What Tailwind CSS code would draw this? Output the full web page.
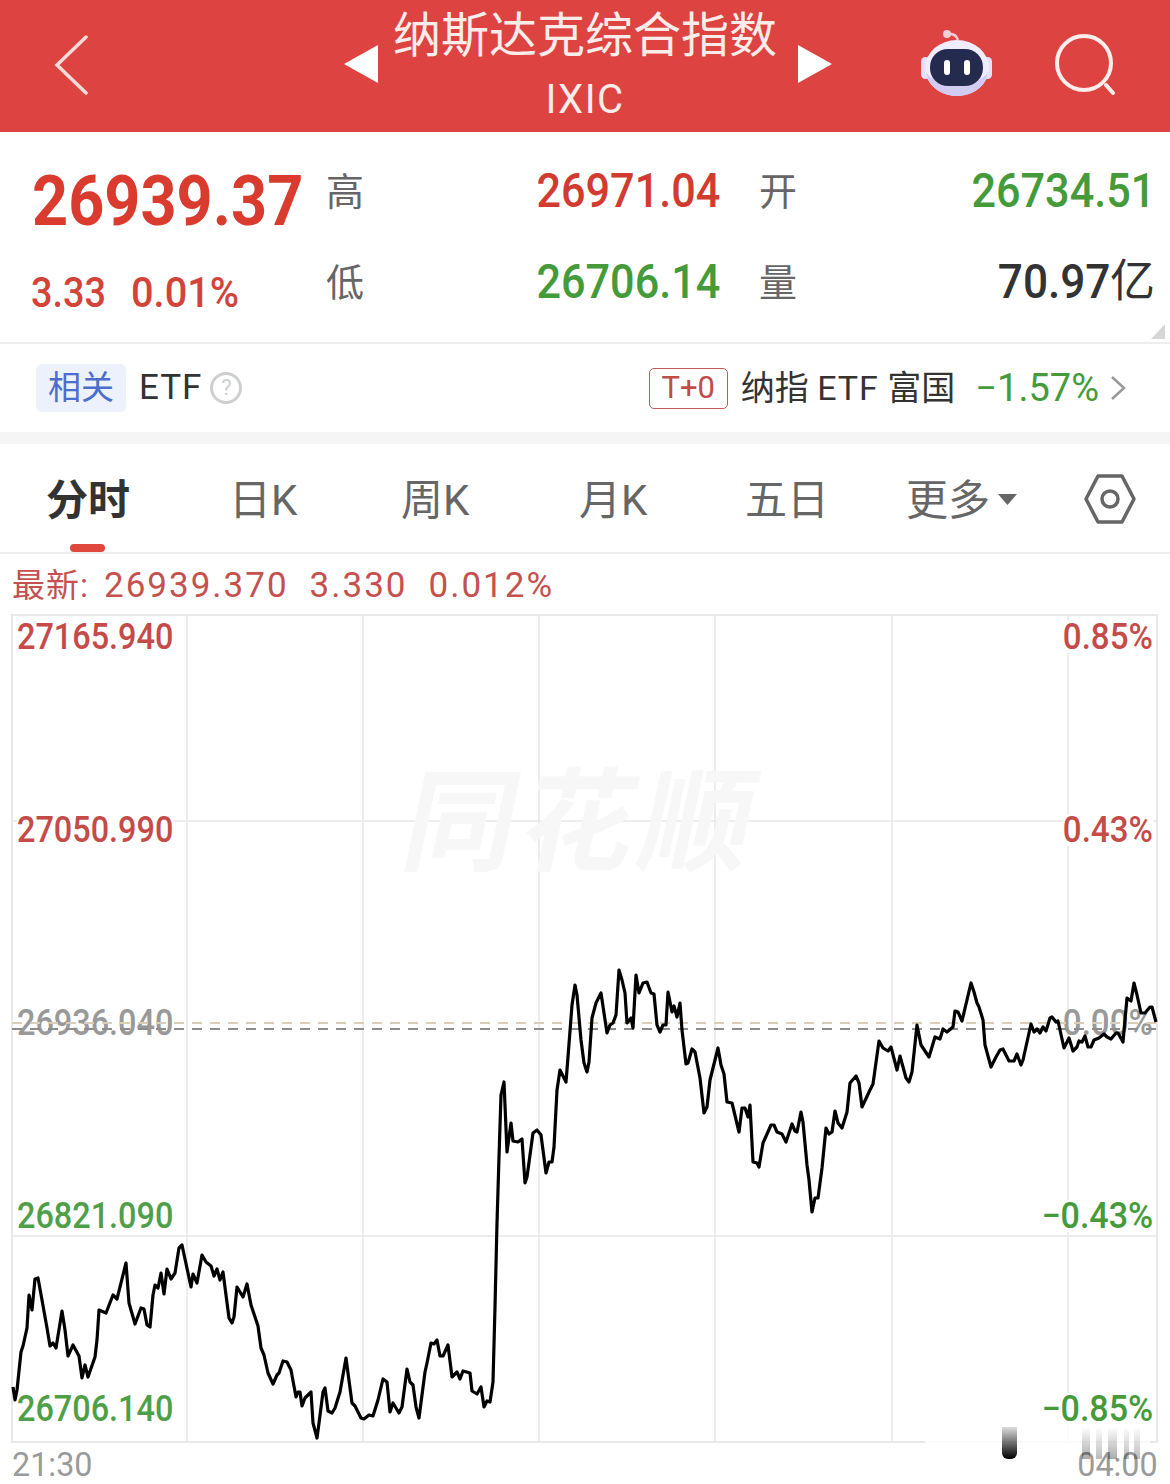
<!DOCTYPE html>
<html lang="zh-CN">
<head>
<meta charset="utf-8">
<script src="https://cdn.jsdelivr.net/npm/@tailwindcss/browser@4"></script>
<title>纳斯达克综合指数</title>
</head>
<body class="bg-white">
<div class="w-[1170px] h-[1484px] overflow-hidden bg-white font-['Roboto','Noto_Sans_CJK_SC',sans-serif]">

  <!-- Header -->
  <header class="h-[132px] bg-[#dd4341] flex items-center text-white">
    <svg class="ml-[54px] w-[34px] h-[60px] -mt-[2px]" viewBox="0 0 34 60" fill="none" stroke="#f9dcd9" stroke-width="3.5" stroke-linecap="round"><path d="M32 2 L3 30 L32 58"/></svg>
    <svg class="ml-[256px] w-[34px] h-[38px] -mt-[5px]" viewBox="0 0 34 38"><path d="M0 19 L34 0 V38 Z" fill="#fff"/></svg>
    <div class="ml-[15px] w-[384px] pt-[6px] flex flex-col items-center">
      <div class="text-[48px] leading-[52px] -mt-[4px] text-[#fbecea] whitespace-nowrap">纳斯达克综合指数</div>
      <div class="text-[40px] leading-[48px] mt-[14px] tracking-[1.5px] text-[#fbecea]">IXIC</div>
    </div>
    <svg class="ml-[21px] w-[34px] h-[38px] -mt-[5px]" viewBox="0 0 34 38"><path d="M34 19 L0 0 V38 Z" fill="#fff"/></svg>
    <svg class="ml-[88px] w-[74px] h-[68px] -mt-[4px]" viewBox="0 0 74 68">
      <path d="M27 4 Q36 3 38 10" fill="none" stroke="#f3c9d2" stroke-width="2.5"/>
      <circle cx="27" cy="4" r="4" fill="#f6cfd6"/>
      <rect x="1" y="27" width="9" height="22" rx="4.5" fill="#e4e0f8"/>
      <rect x="63" y="27" width="9" height="22" rx="4.5" fill="#e4e0f8"/>
      <ellipse cx="37" cy="38" rx="32" ry="28" fill="#efecfb"/>
      <path d="M6 42 C9 59 24 66 37 66 C50 66 65 59 68 42 C60 58 14 58 6 42Z" fill="#d3ccf2"/>
      <rect x="10" y="19" width="53" height="37" rx="18" fill="#242b4f"/>
      <rect x="24" y="30" width="6" height="15" rx="3" fill="#fff"/>
      <rect x="44" y="30" width="6" height="15" rx="3" fill="#fff"/>
    </svg>
    <svg class="ml-[60px] w-[66px] h-[66px]" viewBox="0 0 66 66" fill="none" stroke="#fdeeec" stroke-width="4" stroke-linecap="round"><circle cx="30" cy="30" r="27"/><path d="M52 52 L59 60"/></svg>
  </header>

  <!-- Quote -->
  <section class="relative h-[212px] pt-[12px] pl-[32px] flex border-b-2 border-[#eeeeee]">
    <div class="w-[294px] flex flex-col">
      <div class="h-[92px] pt-[22px] flex items-center">
        <span class="inline-block origin-left scale-x-[0.9] text-[70px] leading-[70px] font-bold text-[#d93b2f] whitespace-nowrap">26939.37</span>
      </div>
      <div class="h-[92px] pt-[20px] flex items-center -ml-[1px] text-[#d2433a] text-[43px] leading-[50px] font-medium">
        <span class="w-[100px] inline-block origin-left scale-x-[0.88] whitespace-nowrap">3.33</span>
        <span class="inline-block origin-left scale-x-[0.925] whitespace-nowrap">0.01%</span>
      </div>
    </div>
    <div class="mt-[1px] grid grid-cols-[38px_356px_77px_358px] grid-rows-[91px_91px] items-center">
      <div class="pt-[4px] text-[38px] text-[#666666]">高</div>
      <div class="text-right"><span class="inline-block origin-right scale-x-[0.9] text-[48px] leading-[54px] font-medium text-[#d23b30]">26971.04</span></div>
      <div class="pt-[4px] pl-[39px] text-[38px] text-[#666666]">开</div>
      <div class="text-right"><span class="inline-block origin-right scale-x-[0.9] text-[48px] leading-[54px] font-medium text-[#459a3a]">26734.51</span></div>
      <div class="pt-[4px] text-[38px] text-[#666666]">低</div>
      <div class="text-right"><span class="inline-block origin-right scale-x-[0.9] text-[48px] leading-[54px] font-medium text-[#459a3a]">26706.14</span></div>
      <div class="pt-[4px] pl-[39px] text-[38px] text-[#666666]">量</div>
      <div class="text-right text-[#333333] flex justify-end items-center"><span class="inline-block origin-right scale-x-[0.92] text-[48px] leading-[54px] font-medium">70.97</span><span class="text-[45px] leading-[54px]">亿</span></div>
    </div>
    <svg class="absolute right-[5px] bottom-[3px] w-[14px] h-[15px]" viewBox="0 0 14 15"><path d="M14 0 V15 H0 Z" fill="#d6d6d6"/></svg>
  </section>

  <!-- ETF row -->
  <section class="h-[88px] flex items-center pl-[36px] pr-[44px]">
    <span class="w-[90px] h-[48px] rounded-[6px] bg-[#ecf1fb] text-[#4a6ec9] text-[33px] leading-[48px] text-center">相关</span>
    <span class="ml-[13px] text-[35px] text-[#333333] tracking-[1px]">ETF</span>
    <span class="ml-[8px] w-[32px] h-[32px] rounded-full border-[3px] border-[#cfcfcf] text-[#cfcfcf] text-[22px] leading-[26px] text-center">?</span>
    <span class="ml-auto w-[79px] h-[41px] rounded-[5px] border border-[#c25a5a] text-[#c24a4a] text-[31px] leading-[38px] text-center">T+0</span>
    <span class="ml-[13px] text-[34px] text-[#333333] whitespace-nowrap">纳指 <span class="tracking-[1px]">ETF</span> 富国</span>
    <span class="ml-[20px] text-[38px] text-[#459a3a] whitespace-nowrap">−1.57%</span>
    <svg class="ml-[11px] w-[16px] h-[26px]" viewBox="0 0 16 26" fill="none" stroke="#999999" stroke-width="2.5"><path d="M2 2 L14 13 L2 24"/></svg>
  </section>

  <div class="h-[12px] bg-[#f5f5f5]"></div>

  <!-- Tabs -->
  <nav class="relative h-[110px] border-b-2 border-[#eeeeee] text-[42px] leading-[50px] text-[#666666]">
    <div class="flex items-center h-[108px] pl-[46px] pt-[6px]">
      <span class="font-bold text-[#333333] w-[183px]">分时</span>
      <span class="w-[172px]">日K</span>
      <span class="w-[178px]">周K</span>
      <span class="w-[166px]">月K</span>
      <span class="w-[161px]">五日</span>
      <span>更多</span>
      <svg class="ml-[8px] w-[19px] h-[11px] -mt-[4px]" viewBox="0 0 19 11"><path d="M0 0 H19 L9.5 11 Z" fill="#666666"/></svg>
      <svg class="ml-[67px] w-[52px] h-[52px] -mt-[5px]" viewBox="0 0 52 52" fill="none" stroke="#666666" stroke-width="3.5" stroke-linejoin="round"><path d="M14 3 H38 L50 26 L38 49 H14 L2 26 Z"/><circle cx="26" cy="26" r="8"/></svg>
    </div>
    <span class="absolute left-[70px] bottom-0 w-[35px] h-[8px] rounded-[4px] bg-[#e0483c]"></span>
  </nav>

  <!-- Latest -->
  <div class="h-[60px] pl-[12px] pt-[10px] text-[35px] leading-[44px] text-[#c4514f] tracking-[2px] whitespace-nowrap flex">
    <span class="w-[92px] text-[33px] tracking-[1px]">最新:</span><span>26939.370</span><span class="ml-[21px]">3.330</span><span class="ml-[21px]">0.012%</span>
  </div>

  <!-- Chart -->
  <div class="relative h-[870px]">
    <svg class="absolute left-0 top-0 w-[1170px] h-[870px]" viewBox="0 614 1170 870" fill="none">
      <g stroke="#e8e8e8" stroke-width="1.5">
        <path d="M187 615V1442M363 615V1442M539 615V1442M715 615V1442M892 615V1442M1068 615V1442"/>
        <path d="M12 821H1157M12 1236H1157"/>
        <rect x="12" y="615" width="1145" height="827" stroke-width="2"/>
      </g>
    </svg>
    <div class="absolute left-[406px] top-[150px] -skew-x-12 text-[112px] leading-[120px] font-bold tracking-[6px] text-[#f7f7f7] whitespace-nowrap">同花顺</div>

    <div class="absolute left-[17px] top-[7px] flex flex-col gap-[161px] text-[36px] leading-[32px] font-medium">
      <span class="h-[32px] w-[172px] inline-block origin-left scale-x-[0.9] bg-white text-[#c44b48]">27165.940</span>
      <span class="h-[32px] w-[172px] inline-block origin-left scale-x-[0.9] bg-white text-[#c44b48]">27050.990</span>
      <span class="h-[32px] w-[172px] inline-block origin-left scale-x-[0.9] text-[#999999]">26936.040</span>
      <span class="h-[32px] w-[172px] inline-block origin-left scale-x-[0.9] bg-white text-[#4f9f49]">26821.090</span>
      <span class="h-[32px] w-[172px] inline-block origin-left scale-x-[0.9] bg-white text-[#4f9f49]">26706.140</span>
    </div>
    <div class="absolute right-[17px] top-[7px] flex flex-col items-end gap-[161px] text-[36px] leading-[32px] font-medium">
      <span class="h-[32px] inline-block origin-right scale-x-[0.92] bg-white text-[#c44b48]">0.85%</span>
      <span class="h-[32px] inline-block origin-right scale-x-[0.92] bg-white text-[#c44b48]">0.43%</span>
      <span class="h-[32px] inline-block origin-right scale-x-[0.92] text-[#999999]">0.00%</span>
      <span class="h-[32px] inline-block origin-right scale-x-[0.946] bg-white text-[#459a3a]">−0.43%</span>
      <span class="h-[32px] inline-block origin-right scale-x-[0.946] bg-white text-[#459a3a]">−0.85%</span>
    </div>

    <svg class="absolute left-0 top-0 w-[1170px] h-[870px]" viewBox="0 614 1170 870" fill="none">
      <path d="M12 1023H1157" stroke="#d9cfb8" stroke-width="2" stroke-dasharray="10 8"/>
      <path d="M12 1029H1157" stroke="#8c8c8c" stroke-width="2" stroke-dasharray="10 8"/>
      <polyline stroke="#000" stroke-width="3.2" stroke-linejoin="round" points="13,1387 15,1400 17,1390 21,1352 23,1346 27,1328 29,1295 32,1310 35,1279 38,1278 42,1300 47,1328 50,1346 53,1343 56,1348 62,1311 65,1330 68,1356 73,1345 79,1356 82,1378 85,1365 88,1377 95,1357 97,1340 99,1310 106,1313 113,1295 117,1299 126,1263 129,1303 135,1324 141,1308 144,1309 147,1325 150,1327 153,1295 155,1285 158,1288 161,1273 164,1294 167,1269 171,1279 175,1273 179,1248 182,1245 191,1287 193,1274 197,1283 202,1255 206,1262 211,1266 214,1276 217,1269 220,1280 223,1272 229,1318 232,1323 234,1317 237,1287 243,1297 247,1284 251,1305 258,1326 261,1348 264,1355 268,1373 273,1384 277,1375 279,1373 283,1361 287,1362 291,1370 296,1397 298,1392 300,1392 302,1406 305,1398 311,1392 313,1423 317,1438 319,1423 323,1392 325,1388 328,1411 332,1413 335,1408 340,1392 346,1358 352,1403 355,1406 361,1418 364,1419 369,1415 373,1416 378,1400 383,1379 387,1382 390,1412 393,1403 399,1413 402,1407 407,1369 410,1382 413,1385 416,1407 419,1418 425,1372 427,1363 431,1343 434,1344 437,1340 440,1356 443,1356 448,1345 452,1377 457,1372 460,1379 463,1371 470,1373 472,1391 477,1394 481,1387 484,1407 487,1401 490,1402 493,1382 495,1307 497,1223 499,1157 501,1095 504,1082 507,1152 511,1123 513,1141 518,1142 522,1139 525,1183 527,1177 533,1133 537,1130 541,1135 546,1173 549,1162 552,1162 554,1147 557,1090 560,1070 566,1082 568,1057 572,1005 575,985 577,995 581,1040 584,1063 587,1072 589,1062 592,1018 596,1003 601,993 607,1033 610,1025 613,1023 616,1015 619,970 622,980 625,993 627,1023 631,1018 633,1028 636,975 639,993 643,983 647,982 651,993 654,994 657,1025 660,1032 663,1025 666,1025 668,992 672,1012 674,1006 677,1017 680,1003 682,1030 686,1064 688,1063 692,1049 695,1052 700,1078 704,1113 707,1107 710,1080 718,1048 721,1065 724,1074 727,1102 732,1103 739,1132 742,1108 745,1108 748,1117 750,1105 753,1162 757,1163 759,1167 763,1143 771,1125 774,1125 777,1132 782,1134 786,1142 792,1124 795,1131 797,1132 801,1112 803,1122 807,1165 809,1180 812,1212 815,1198 818,1198 822,1168 826,1128 829,1134 832,1132 835,1111 838,1123 842,1128 847,1112 850,1083 856,1076 859,1083 862,1107 870,1090 873,1084 879,1041 883,1048 888,1051 891,1047 897,1070 900,1056 906,1078 909,1082 912,1072 917,1025 921,1045 929,1057 935,1037 940,1039 943,1029 947,1032 953,1027 955,1011 958,1012 962,1021 971,983 974,992 977,1003 979,1007 983,1020 985,1045 991,1067 996,1057 1000,1050 1003,1049 1009,1061 1014,1061 1017,1054 1021,1065 1023,1060 1031,1024 1034,1032 1037,1029 1040,1033 1043,1027 1046,1031 1050,1018 1052,1017 1056,1022 1058,1021 1064,1048 1069,1038 1073,1051 1077,1047 1079,1041 1082,1042 1085,1036 1088,1047 1091,1047 1094,1040 1099,1038 1104,1034 1107,1037 1111,1039 1116,1033 1118,1033 1123,1042 1127,998 1131,1001 1134,983 1137,995 1141,1013 1145,1013 1150,1007 1152,1007 1156,1022"/>
    </svg>

    <!-- time axis -->
    <div class="absolute left-0 top-[834px] w-full flex justify-between px-[12px] text-[34px] leading-[32px] text-[#9a9a9a]">
      <span class="inline-block origin-left scale-x-[0.95]">21:30</span><span class="inline-block origin-right scale-x-[0.95]">04:00</span>
    </div>

    <!-- navigation-bar smear over the bottom edge -->
    <div class="absolute left-[925px] top-[811px] w-[225px] h-[21px] bg-white/80"></div>
    <div class="absolute left-[1002px] top-[813px] w-[15px] h-[32px] rounded-b-[6px] bg-linear-to-b from-[#00000022] to-black"></div>
    <div class="absolute left-[1082px] top-[813px] w-[8px] h-[32px] bg-linear-to-b from-transparent to-[#00000055]"></div>
    <div class="absolute left-[1096px] top-[813px] w-[6px] h-[32px] bg-linear-to-b from-transparent to-[#00000044]"></div>
    <div class="absolute left-[1108px] top-[813px] w-[9px] h-[32px] bg-linear-to-b from-transparent to-[#00000055]"></div>
    <div class="absolute left-[1124px] top-[813px] w-[5px] h-[32px] bg-linear-to-b from-transparent to-[#00000044]"></div>
    <div class="absolute left-[1134px] top-[813px] w-[6px] h-[32px] bg-linear-to-b from-transparent to-[#00000044]"></div>
  </div>
</div>
</body>
</html>
